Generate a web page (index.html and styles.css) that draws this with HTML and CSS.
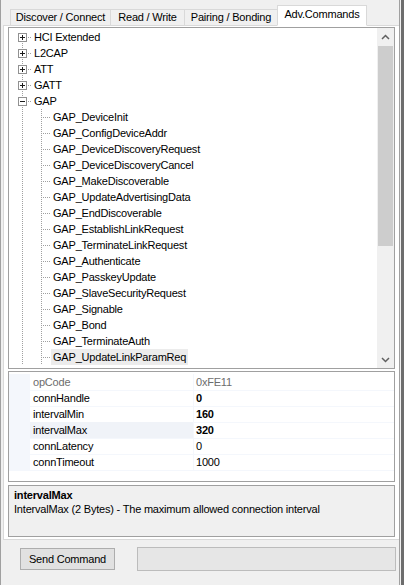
FILE: index.html
```html
<!DOCTYPE html>
<html>
<head>
    <link rel="stylesheet" href="styles.css">
</head>
<body>
<div class="frame">
    <div class="main">
        <div class="tabs">
            <div class="tab-fill tab-fill-left"></div>
            <div class="tab tab-discover">Discover / Connect</div>
            <div class="tab tab-readwrite">Read / Write</div>
            <div class="tab tab-pairing">Pairing / Bonding</div>
            <div class="tab tab-adv active">Adv.Commands</div>
            <div class="tab-fill tab-fill-right"></div>
        </div>

        <div class="page">
            <div class="tree">
                <div class="tree-body">
                    <div class="node"><span class="cell c-first"><span class="box plus"></span></span><span class="label">HCI Extended</span></div>
                    <div class="node"><span class="cell c-branch"><span class="box plus"></span></span><span class="label">L2CAP</span></div>
                    <div class="node"><span class="cell c-branch"><span class="box plus"></span></span><span class="label">ATT</span></div>
                    <div class="node"><span class="cell c-branch"><span class="box plus"></span></span><span class="label">GATT</span></div>
                    <div class="node"><span class="cell c-branch"><span class="box minus"></span></span><span class="label">GAP</span></div>
                    <div class="node"><span class="cell c-line"></span><span class="cell c-branch"></span><span class="label">GAP_DeviceInit</span></div>
                    <div class="node"><span class="cell c-line"></span><span class="cell c-branch"></span><span class="label">GAP_ConfigDeviceAddr</span></div>
                    <div class="node"><span class="cell c-line"></span><span class="cell c-branch"></span><span class="label">GAP_DeviceDiscoveryRequest</span></div>
                    <div class="node"><span class="cell c-line"></span><span class="cell c-branch"></span><span class="label">GAP_DeviceDiscoveryCancel</span></div>
                    <div class="node"><span class="cell c-line"></span><span class="cell c-branch"></span><span class="label">GAP_MakeDiscoverable</span></div>
                    <div class="node"><span class="cell c-line"></span><span class="cell c-branch"></span><span class="label">GAP_UpdateAdvertisingData</span></div>
                    <div class="node"><span class="cell c-line"></span><span class="cell c-branch"></span><span class="label">GAP_EndDiscoverable</span></div>
                    <div class="node"><span class="cell c-line"></span><span class="cell c-branch"></span><span class="label">GAP_EstablishLinkRequest</span></div>
                    <div class="node"><span class="cell c-line"></span><span class="cell c-branch"></span><span class="label">GAP_TerminateLinkRequest</span></div>
                    <div class="node"><span class="cell c-line"></span><span class="cell c-branch"></span><span class="label">GAP_Authenticate</span></div>
                    <div class="node"><span class="cell c-line"></span><span class="cell c-branch"></span><span class="label">GAP_PasskeyUpdate</span></div>
                    <div class="node"><span class="cell c-line"></span><span class="cell c-branch"></span><span class="label">GAP_SlaveSecurityRequest</span></div>
                    <div class="node"><span class="cell c-line"></span><span class="cell c-branch"></span><span class="label">GAP_Signable</span></div>
                    <div class="node"><span class="cell c-line"></span><span class="cell c-branch"></span><span class="label">GAP_Bond</span></div>
                    <div class="node"><span class="cell c-line"></span><span class="cell c-branch"></span><span class="label">GAP_TerminateAuth</span></div>
                    <div class="node"><span class="cell c-line"></span><span class="cell c-branch"></span><span class="label selected">GAP_UpdateLinkParamReq</span></div>
                </div>
                <div class="vscroll">
                    <div class="sb-btn">
                        <svg width="9" height="6" viewBox="0 0 9 6"><polyline points="1,5 4.5,1.5 8,5" fill="none" stroke="#606060" stroke-width="1.5"/></svg>
                    </div>
                    <div class="sb-thumb"></div>
                    <div class="sb-space"></div>
                    <div class="sb-btn">
                        <svg width="9" height="6" viewBox="0 0 9 6"><polyline points="1,1 4.5,4.5 8,1" fill="none" stroke="#606060" stroke-width="1.5"/></svg>
                    </div>
                </div>
            </div>

            <div class="grid">
                <div class="prop readonly"><span class="margin"></span><span class="name">opCode</span><span class="value">0xFE11</span></div>
                <div class="prop"><span class="margin"></span><span class="name">connHandle</span><span class="value bold">0</span></div>
                <div class="prop"><span class="margin"></span><span class="name">intervalMin</span><span class="value bold">160</span></div>
                <div class="prop current"><span class="margin"></span><span class="name">intervalMax</span><span class="value bold">320</span></div>
                <div class="prop"><span class="margin"></span><span class="name">connLatency</span><span class="value">0</span></div>
                <div class="prop"><span class="margin"></span><span class="name">connTimeout</span><span class="value">1000</span></div>
            </div>

            <div class="desc">
                <div class="desc-title">intervalMax</div>
                <div class="desc-text">IntervalMax (2 Bytes) - The maximum allowed connection interval</div>
            </div>
        </div>

        <div class="actions">
            <button class="send">Send Command</button>
            <div class="progress"></div>
        </div>
    </div>
    <div class="edge"></div>
</div>
</body>
</html>
```

FILE: styles.css
```css
body {
    margin: 0;
    font-family: "Liberation Sans", Arial, sans-serif;
    font-size: 11px;
    letter-spacing: -0.2px;
    color: #000;
    background: #f0f0f0;
}

.frame {
    display: flex;
    width: 404px;
    height: 585px;
}

.main {
    width: 398px;
    border-left: 1px solid #a0a0a0;
    border-right: 1px solid #a0a0a0;
    display: flex;
    flex-direction: column;
}

.edge {
    width: 4px;
    background: linear-gradient(to right, #f0f0f0 0 1px, #6d6d6d 1px);
}

/* tab strip */
.tabs {
    display: flex;
    align-items: flex-end;
    height: 26px;
}

.tab-fill {
    height: 0;
    border-bottom: 1px solid #d9d9d9;
}

.tab-fill-left {
    margin-left: 2px;
    width: 7px;
}

.tab-fill-right {
    flex: 1;
}

.tab {
    height: 15px;
    line-height: 15px;
    border: 1px solid #d9d9d9;
    border-right: none;
    background: #f0f0f0;
    text-align: center;
    white-space: nowrap;
}

.tab-discover { width: 99px; }
.tab-readwrite { width: 73px; }
.tab-pairing { width: 92px; }

.tab.active {
    width: 88px;
    height: 19px;
    line-height: 17px;
    border-right: 1px solid #d9d9d9;
    border-bottom-color: #fff;
    background: #fff;
}

/* tab page */
.page {
    margin-left: 2px;
    border-left: 1px solid #d9d9d9;
    border-bottom: 1px solid #d9d9d9;
    background: #fff;
    padding: 1px 4px 2px 4px;
    display: flex;
    flex-direction: column;
}

.tree {
    height: 340px;
    border: 1px solid #a0a0a0;
    display: flex;
    background: #fff;
}

.tree-body {
    flex: 1;
    padding: 1px 0 0 4px;
    overflow: hidden;
}

.node {
    display: flex;
    height: 16px;
    white-space: nowrap;
}

.cell {
    width: 19px;
    height: 16px;
    flex: none;
    display: flex;
    align-items: center;
}

.c-line {
    background: repeating-linear-gradient(to bottom, #a0a0a0 0 1px, transparent 1px 2px) 9px 0 / 1px 100% no-repeat;
}

.c-branch {
    background:
        repeating-linear-gradient(to right, #a0a0a0 0 1px, transparent 1px 2px) 9px 8px / 10px 1px no-repeat,
        repeating-linear-gradient(to bottom, #a0a0a0 0 1px, transparent 1px 2px) 9px 0 / 1px 100% no-repeat;
}

.c-first {
    background:
        repeating-linear-gradient(to right, #a0a0a0 0 1px, transparent 1px 2px) 9px 8px / 10px 1px no-repeat,
        repeating-linear-gradient(to bottom, #a0a0a0 0 1px, transparent 1px 2px) 9px 8px / 1px 8px no-repeat;
}

.box {
    width: 7px;
    height: 7px;
    margin-left: 5px;
    border: 1px solid #919191;
    background-color: #fff;
    background-repeat: no-repeat;
}

.plus {
    background-image: linear-gradient(#1c1c1c, #1c1c1c), linear-gradient(#1c1c1c, #1c1c1c);
    background-size: 5px 1px, 1px 5px;
    background-position: 1px 3px, 3px 1px;
}

.minus {
    background-image: linear-gradient(#1c1c1c, #1c1c1c);
    background-size: 5px 1px;
    background-position: 1px 3px;
}

.label {
    padding: 0 2px;
    line-height: 16px;
}

.label.selected {
    background: #ececec;
}

.vscroll {
    width: 17px;
    background: #f0f0f0;
    display: flex;
    flex-direction: column;
}

.sb-btn {
    height: 17px;
    display: flex;
    align-items: center;
    justify-content: center;
}

.sb-thumb {
    height: 200px;
    margin: 1px 1px 0 1px;
    background: #cdcdcd;
}

.sb-space {
    flex: 1;
}

/* property grid */
.grid {
    height: 107px;
    margin-top: 2px;
    border: 1px solid #a0a0a0;
    padding-top: 2px;
    background: #fff;
}

.prop {
    display: grid;
    grid-template-columns: 21px 163px 1fr;
    height: 16px;
    line-height: 16px;
}

.prop .margin {
    background: #f4f7fc;
}

.prop .name {
    padding-left: 3px;
    border-bottom: 1px solid #f4f7fc;
}

.prop .value {
    padding-left: 2px;
    border-left: 1px solid #f4f7fc;
    border-bottom: 1px solid #f4f7fc;
}

.prop.readonly .name,
.prop.readonly .value {
    color: #6d6d6d;
}

.prop.current .name {
    background: #f0f3f8;
}

.bold {
    font-weight: bold;
}

.desc {
    height: 44px;
    margin-top: 3px;
    border: 1px solid #a0a0a0;
    background: #f0f0f0;
    padding: 3px 5px;
}

.desc-title {
    font-weight: bold;
    line-height: 13px;
}

.desc-text {
    line-height: 15px;
}

/* bottom bar */
.actions {
    display: flex;
    align-items: center;
    margin-top: 7px;
}

.send {
    width: 95px;
    height: 22px;
    margin-left: 19px;
    padding: 0;
    border: 1px solid #adadad;
    background: #e1e1e1;
    font-family: "Liberation Sans", Arial, sans-serif;
    font-size: 11px;
    letter-spacing: -0.2px;
    color: #000;
}

.progress {
    width: 257px;
    height: 22px;
    margin-left: 22px;
    border: 1px solid #bcbcbc;
    background: #e6e6e6;
}
```
